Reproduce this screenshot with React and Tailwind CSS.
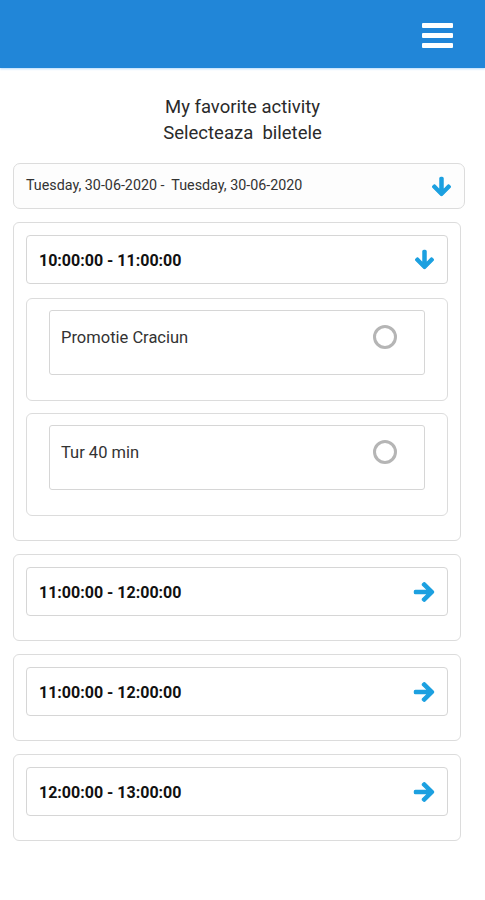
import React from "react";
import { FaArrowDown, FaArrowRight } from "react-icons/fa";

function Option({ label }) {
  return (
    <div className="border border-[#dcdcdc] rounded-[6px] px-[22px] pt-[11px] pb-[25px]">
      <div className="h-[65px] border border-[#d6d6d6] rounded-[3px] pl-[11px] pr-[27px] pt-[16px] flex justify-between items-start">
        <span className="text-[16.5px] leading-[22px] text-[#333]">{label}</span>
        <div className="w-[24px] h-[24px] rounded-full border-[3px] border-[#b5b5b5] -mt-[2px]" />
      </div>
    </div>
  );
}

function Group({ time, open, children }) {
  return (
    <div className="w-[448px] ml-[13px] border border-[#dcdcdc] rounded-[6px] px-[12px] pt-[12px] pb-[24px]">
      <div className="h-[49px] border border-[#d6d6d6] rounded-[4px] pl-[12px] pr-[12px] flex items-center justify-between">
        <span className="text-[16px] font-bold text-[#111] pt-[2px]">{time}</span>
        {open ? (
          <FaArrowDown className="text-[#1ca0e0] w-[21px] h-[21px]" stroke="currentColor" strokeWidth={28} />
        ) : (
          <FaArrowRight className="text-[#1ca0e0] w-[22px] h-[22px]" stroke="currentColor" strokeWidth={28} />
        )}
      </div>
      {children && <div className="mt-[14px] flex flex-col gap-[12px]">{children}</div>}
    </div>
  );
}

export default function App() {
  return (
    <div className="w-[485px] min-h-[900px] bg-white font-['Roboto',sans-serif]">
      <header className="h-[68px] bg-[#2186d8] flex justify-end pt-[23px] pr-[32px] shadow-[0_1px_2px_rgba(33,150,243,0.35)]">
        <div className="flex flex-col gap-[5px]">
          <div className="w-[31px] h-[5px] bg-white rounded-[1px]" />
          <div className="w-[31px] h-[5px] bg-white rounded-[1px]" />
          <div className="w-[31px] h-[5px] bg-white rounded-[1px]" />
        </div>
      </header>
      <div className="pt-[26px] text-center text-[18.5px] leading-[26px] text-[#2a2a2a]">
        <div>My favorite activity</div>
        <div>Selecteaza&nbsp; biletele</div>
      </div>
      <div className="mt-[17px] ml-[13px] w-[452px] h-[46px] border border-[#dcdcdc] rounded-[7px] bg-[#fdfdfd] pl-[12px] pr-[12px] flex items-center justify-between">
        <span className="text-[14.3px] text-[#333]">Tuesday, 30-06-2020 -&nbsp; Tuesday, 30-06-2020</span>
        <FaArrowDown className="text-[#1ca0e0] w-[21px] h-[21px]" stroke="currentColor" strokeWidth={28} />
      </div>
      <div className="mt-[13px] flex flex-col gap-[13px]">
        <Group time="10:00:00 - 11:00:00" open>
          <Option label="Promotie Craciun" />
          <Option label="Tur 40 min" />
        </Group>
        <Group time="11:00:00 - 12:00:00" />
        <Group time="11:00:00 - 12:00:00" />
        <Group time="12:00:00 - 13:00:00" />
      </div>
    </div>
  );
}
